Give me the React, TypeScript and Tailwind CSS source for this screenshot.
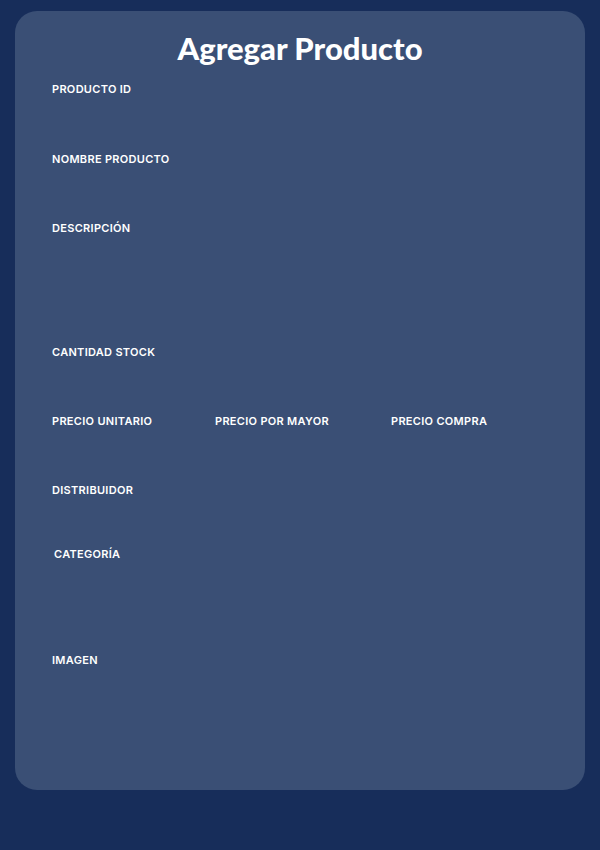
const Field = ({ label, h, className = "" }: { label: string; h: string; className?: string }) => (
  <div className={`flex flex-col ${h} ${className}`}>
    <label className="text-[11px] leading-[14px] font-semibold uppercase tracking-[0.3px] text-white">{label}</label>
  </div>
);

export default function App() {
  return (
    <div className="min-h-[850px] bg-[#172d5a] pt-[11px] px-[15px] font-['Inter',sans-serif]">
      <form className="h-[779px] rounded-[22px] bg-[#3a4f75] pt-[19px] px-[37px]">
        <h1 className="text-center text-[31px] leading-[36px] font-black tracking-[0px] text-white font-['Lato',sans-serif] mb-[16px]">
          Agregar Producto
        </h1>
        <Field label="Producto ID" h="h-[70px]" />
        <Field label="Nombre Producto" h="h-[69px]" />
        <Field label="Descripción" h="h-[124px]" />
        <Field label="Cantidad Stock" h="h-[69px]" />
        <div className="grid grid-cols-[163px_176px_1fr]">
          <Field label="Precio Unitario" h="h-[69px]" />
          <Field label="Precio por Mayor" h="h-[69px]" />
          <Field label="Precio Compra" h="h-[69px]" />
        </div>
        <Field label="Distribuidor" h="h-[64px]" />
        <Field label="Categoría" h="h-[106px]" className="pl-[2px]" />
        <Field label="Imagen" h="h-[100px]" />
      </form>
    </div>
  );
}
